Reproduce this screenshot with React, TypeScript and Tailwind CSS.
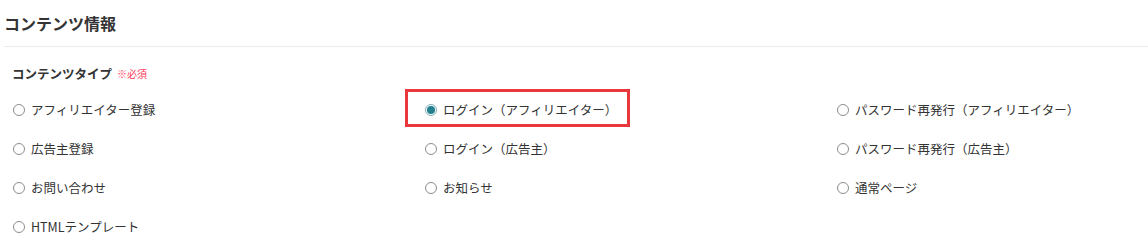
import { useState } from 'react';

const contentTypes = [
  'アフィリエイター登録',
  'ログイン（アフィリエイター）',
  'パスワード再発行（アフィリエイター）',
  '広告主登録',
  'ログイン（広告主）',
  'パスワード再発行（広告主）',
  'お問い合わせ',
  'お知らせ',
  '通常ページ',
  'HTMLテンプレート',
];

function Radio({ checked }: { checked: boolean }) {
  return checked ? (
    <span className="flex h-[12px] w-[12px] shrink-0 items-center justify-center rounded-full border border-[#7fb0b8] bg-white">
      <span className="h-[8px] w-[8px] rounded-full bg-[#23808f]" />
    </span>
  ) : (
    <span className="h-[12px] w-[12px] shrink-0 rounded-full border border-[#8c8c8c] bg-white" />
  );
}

export default function App() {
  const [selected, setSelected] = useState('ログイン（アフィリエイター）');

  return (
    <div className="min-h-[252px] w-[1148px] bg-white font-['Noto_Sans_CJK_JP',sans-serif] text-[#333]">
      <div className="ml-[4px] flex h-[47px] items-center border-b border-[#ececec]">
        <h2 className="text-[16px] font-bold leading-6 text-[#333]">コンテンツ情報</h2>
      </div>

      <div className="px-[12px]">
        <div className="mt-[19px] flex h-4 items-center gap-[5px]">
          <span className="text-[12.5px] font-bold leading-4 text-[#333]">コンテンツタイプ</span>
          <span className="text-[10px] leading-4 text-[#ff3b5c]">※必須</span>
        </div>

        <div className="mt-[8px] grid grid-cols-[412px_412px_1fr]">
          {contentTypes.map((type) => {
            const checked = selected === type;
            return (
              <label
                key={type}
                className="relative flex h-[39px] cursor-pointer items-center gap-[6px] pl-[1px] text-[12.5px] leading-5"
                onClick={() => setSelected(type)}
              >
                {checked ? (
                  <span className="pointer-events-none absolute left-[-19px] top-[-1px] h-[38px] w-[225px] border-[3px] border-[#e8383d]" />
                ) : null}
                <Radio checked={checked} />
                <span>{type}</span>
              </label>
            );
          })}
        </div>
      </div>
    </div>
  );
}
